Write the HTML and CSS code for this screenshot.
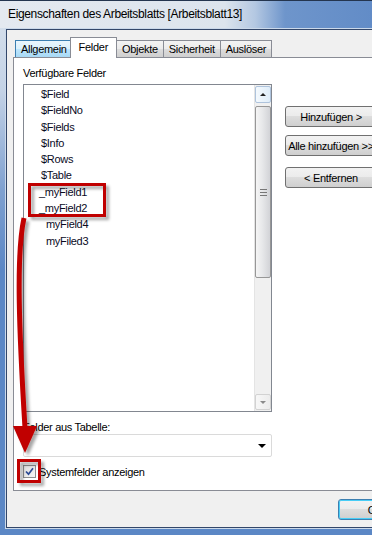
FILE: index.html
```html
<!DOCTYPE html>
<html lang="de">

<head>
    <meta charset="UTF-8">
    <meta name="viewport" content="width=device-width, initial-scale=1.0">
    <title>Eigenschaften des Arbeitsblatts</title>
    <link rel="stylesheet" href="styles.css">
</head>

<body>
    <div class="window">
        <div class="titlebar">Eigenschaften des Arbeitsblatts [Arbeitsblatt13]</div>

        <div class="dialog">
            <div class="tabs">
                <div class="tab hover">Allgemein</div>
                <div class="tab active">Felder</div>
                <div class="tab">Objekte</div>
                <div class="tab">Sicherheit</div>
                <div class="tab">Auslöser</div>
            </div>

            <div class="page">
                <div class="label">Verfügbare Felder</div>

                <div class="fields-row">
                    <div class="listbox">
                        <ul class="items">
                            <li class="sys">$Field</li>
                            <li class="sys">$FieldNo</li>
                            <li class="sys">$Fields</li>
                            <li class="sys">$Info</li>
                            <li class="sys">$Rows</li>
                            <li class="sys">$Table</li>
                            <li class="under">_myField1</li>
                            <li class="under">_myField2</li>
                            <li class="plain">myField4</li>
                            <li class="plain">myFiled3</li>
                        </ul>
                        <div class="scrollbar">
                            <div class="sb-btn up"><span class="tri-up"></span></div>
                            <div class="thumb"><span class="grip"></span></div>
                            <div class="sb-btn down"><span class="tri-down"></span></div>
                        </div>
                    </div>

                    <div class="buttons">
                        <button class="btn">Hinzufügen &gt;</button>
                        <button class="btn">Alle hinzufügen &gt;&gt;</button>
                        <button class="btn">&lt; Entfernen</button>
                    </div>
                </div>

                <div class="label second">Felder aus Tabelle:</div>
                <div class="combo"><span class="combo-arrow"></span></div>

                <label class="check">
                    <span class="box">
                        <svg width="9" height="9" viewBox="0 0 9 9">
                            <path d="M1 4.5 L3.5 7.2 L8 1.2" fill="none" stroke="#2b4a93" stroke-width="1.7" />
                        </svg>
                    </span>
                    Systemfelder anzeigen
                </label>
            </div>

            <div class="footer">
                <button class="btn ok">OK</button>
            </div>
        </div>

        <!-- red marks drawn on top of the screenshot -->
        <svg class="marks" width="372" height="535" viewBox="0 0 372 535">
            <defs>
                <filter id="shade" x="-20%" y="-20%" width="160%" height="160%">
                    <feDropShadow dx="3" dy="3" stdDeviation="1.6" flood-color="#000" flood-opacity="0.35" />
                </filter>
            </defs>
            <g filter="url(#shade)">
                <rect x="29.5" y="184.5" width="75" height="31" fill="none" stroke="#c00000" stroke-width="3" />
                <path d="M24 218 C 16 255, 19 330, 25 428" fill="none" stroke="#c00000" stroke-width="5" />
                <polygon points="13,426 37,426 25,453" fill="#c00000" />
                <rect x="18.5" y="460.5" width="21" height="21" fill="none" stroke="#c00000" stroke-width="3" />
            </g>
        </svg>
    </div>
</body>

</html>
```

FILE: styles.css
```css
body {
    margin: 0;
    width: 372px;
    height: 535px;
    overflow: hidden;
    font-family: "Liberation Sans", Arial, sans-serif;
    font-size: 11px;
    letter-spacing: -0.3px;
    color: #000;
}

.window {
    position: relative;
    width: 440px;
    height: 535px;
    padding-left: 6px;
    box-sizing: border-box;
    background: linear-gradient(to bottom, #d9e2ed 0, #c4d3e6 90px, #7fa1d0 190px, #5b87c5 270px, #5b87c5 100%);
}

.titlebar {
    height: 28px;
    margin-left: -6px;
    padding-left: 8px;
    box-sizing: border-box;
    border-top: 1px solid #24354f;
    background: linear-gradient(to right, #e4e9f0 0, #dce4ed 225px, #b4c8e2 255px, #6e95cb 285px, #5985c4 100%);
    font-size: 12px;
    letter-spacing: -0.35px;
    line-height: 26px;
}

.dialog {
    margin-top: 1px;
    height: 499px;
    box-sizing: border-box;
    background: #f0f0f0;
    border: 1px solid #33476a;
    border-right: none;
    box-shadow: 0 0 0 1px #cbd9ea;
}

/* tabs */

.tabs {
    display: flex;
    align-items: flex-end;
    height: 20px;
    margin-top: 7px;
    padding-left: 8px;
}

.tab {
    height: 17px;
    box-sizing: border-box;
    padding: 0 5px;
    border: 1px solid #898c95;
    border-bottom: none;
    margin-right: -1px;
    line-height: 16px;
    background: linear-gradient(to bottom, #f3f3f3 0, #ebebeb 50%, #dddddd 50%, #cfcfcf 100%);
}

.tab.hover {
    background: linear-gradient(to bottom, #eaf6fd 0, #d9f0fc 50%, #bee6fd 50%, #a7d9f5 100%);
    border-color: #3c7fb1;
}

.tab.active {
    position: relative;
    z-index: 1;
    height: 21px;
    margin: 0 -1px -1px -2px;
    padding: 0 8px;
    background: #fff;
    line-height: 18px;
}

/* tab page */

.page {
    height: 434px;
    margin-left: 6px;
    box-sizing: border-box;
    padding: 8px 0 0 9px;
    border: 1px solid #898c95;
    background: #fff;
}

.label {
    line-height: 14px;
}

.label.second {
    margin-top: 9px;
    line-height: 13px;
}

.fields-row {
    display: flex;
    margin-top: 4px;
    gap: 13px;
}

.listbox {
    display: flex;
    width: 249px;
    height: 328px;
    box-sizing: border-box;
    border: 1px solid #828790;
}

.items {
    flex: 1;
    list-style: none;
    margin: 0;
    padding: 1px 0 0 0;
    font-size: 11px;
}

.items li {
    line-height: 16.3px;
    color: #0a0a1e;
}

.items .sys {
    padding-left: 17px;
}

.items .under {
    padding-left: 15px;
}

.items .plain {
    padding-left: 22px;
}

/* scrollbar */

.scrollbar {
    display: flex;
    flex-direction: column;
    width: 17px;
    padding: 1px 0;
    box-sizing: border-box;
    border-left: 1px solid #e4e4e4;
    background: #f0f0f0;
}

.sb-btn {
    display: flex;
    justify-content: center;
    align-items: center;
    box-sizing: border-box;
    border-radius: 2px;
}

.sb-btn.up {
    height: 17px;
    border: 1px solid #aec3dc;
    background: linear-gradient(to right, #f4f9fd, #dfedf9);
}

.sb-btn.down {
    height: 16px;
    margin-top: auto;
    border: 1px solid #d2d2d2;
    background: linear-gradient(to right, #f7f7f7, #ececec);
}

.tri-up {
    width: 0;
    height: 0;
    border-left: 3px solid transparent;
    border-right: 3px solid transparent;
    border-bottom: 3px solid #222;
}

.tri-down {
    width: 0;
    height: 0;
    border-left: 3px solid transparent;
    border-right: 3px solid transparent;
    border-top: 3px solid #8a8a8a;
}

.thumb {
    display: flex;
    justify-content: center;
    align-items: center;
    height: 172px;
    margin-top: 3px;
    box-sizing: border-box;
    border: 1px solid #979797;
    border-radius: 2px;
    background: linear-gradient(to right, #f5f5f5 0, #e7e8ea 45%, #d2d3d7 100%);
}

.grip {
    width: 7px;
    height: 5px;
    border-top: 1px solid #777;
    border-bottom: 1px solid #777;
    background: linear-gradient(#777, #777) center / 7px 1px no-repeat;
}

/* buttons */

.buttons {
    display: flex;
    flex-direction: column;
    margin-top: 22px;
}

.btn {
    width: 92px;
    height: 21px;
    padding: 0;
    border: 1px solid #707070;
    border-radius: 3px;
    font-family: "Liberation Sans", Arial, sans-serif;
    font-size: 11px;
    letter-spacing: -0.3px;
    color: #000;
    white-space: nowrap;
    background: linear-gradient(to bottom, #f2f2f2 0, #ebebeb 50%, #dddddd 50%, #cfcfcf 100%);
}

.buttons .btn:nth-child(1) {
    margin-bottom: 8px;
}

.buttons .btn:nth-child(2) {
    margin-bottom: 11px;
}

/* combo + checkbox */

.combo {
    display: flex;
    justify-content: flex-end;
    align-items: center;
    width: 249px;
    height: 23px;
    box-sizing: border-box;
    padding-right: 5px;
    border: 1px solid #dadada;
    border-radius: 2px;
}

.combo-arrow {
    width: 0;
    height: 0;
    border-left: 4px solid transparent;
    border-right: 4px solid transparent;
    border-top: 4px solid #000;
}

.check {
    display: flex;
    align-items: center;
    gap: 3px;
    height: 13px;
    margin-top: 8px;
}

.box {
    display: flex;
    justify-content: center;
    align-items: center;
    width: 13px;
    height: 13px;
    box-sizing: border-box;
    border: 1px solid #8e8f8f;
    background: linear-gradient(135deg, #dcdcdc, #f6f6f6);
}

/* footer */

.footer {
    padding: 8px 0 0 331px;
}

.btn.ok {
    width: 75px;
    border-color: #3c7fb1;
    box-shadow: inset 0 0 0 1px #48cdf6;
}

.marks {
    position: absolute;
    top: 0;
    left: 0;
    pointer-events: none;
}
```
